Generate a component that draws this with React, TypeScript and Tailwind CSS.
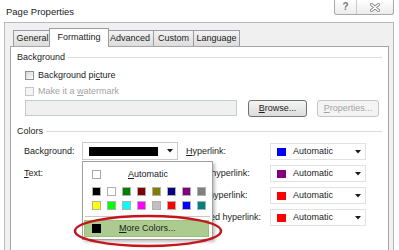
import React from 'react';

const row1 = ['#000000', '#ffffff', '#008000', '#800000', '#808000', '#000080', '#800080', '#808080'];
const row2 = ['#ffff00', '#00ff00', '#00ffff', '#ff00ff', '#c0c0c0', '#ff0000', '#0000ff', '#008080'];

function Arrow() {
  return (
    <svg width="6" height="4" viewBox="0 0 6 4" className="block">
      <path d="M0 0 H6 L3 3.5 Z" fill="#1a1a1a" />
    </svg>
  );
}

function ColorDrop({ color }: { color: string }) {
  return (
    <div className="flex h-[17px] w-[96px] items-center border border-[#e2e2e2] bg-white pl-[6px] pr-[4px]">
      <div className="h-[8px] w-[9px]" style={{ backgroundColor: color }} />
      <span className="ml-[7px] flex-1">Automatic</span>
      <Arrow />
    </div>
  );
}

function Tab({ label, cls }: { label: string; cls: string }) {
  return (
    <div
      className={`flex h-[16px] items-center justify-center border border-b-0 border-[#9a9ca3] bg-linear-to-b from-[#f3f3f3] to-[#dcdcdc] ${cls}`}
    >
      {label}
    </div>
  );
}

export default function App() {
  return (
    <div className="relative h-[250px] w-[399px] overflow-hidden bg-white text-[9px] leading-none text-[#1c1c1c] font-['Liberation_Sans',Arial,sans-serif]">
      {/* Title bar */}
      <div className="flex h-[22px] items-start justify-between">
        <div className="pl-[6px] pt-[7px] text-[9.5px] text-[#1a1a1a]">Page Properties</div>
        <div className="mr-[5px] flex h-[15px] overflow-hidden rounded-b-[3px] border border-t-0 border-[#a9a9a9] bg-linear-to-b from-[#ffffff] to-[#ececec]">
          <div className="flex w-[22px] items-center justify-center border-r border-[#c9c9c9] text-[10px] font-bold text-[#7a7a7a]">
            ?
          </div>
          <div className="flex w-[36px] items-center justify-center">
            <svg width="10" height="9" viewBox="0 0 10 9">
              <path d="M1.5 1.5 L8.5 7.5 M8.5 1.5 L1.5 7.5" stroke="#8a8a8a" strokeWidth="3" strokeLinecap="round" />
              <path d="M1.5 1.5 L8.5 7.5 M8.5 1.5 L1.5 7.5" stroke="#ffffff" strokeWidth="1.4" strokeLinecap="round" />
            </svg>
          </div>
        </div>
      </div>

      {/* Dialog client frame */}
      <div className="ml-[4px] h-[228px] w-[390px] border border-b-0 border-[#b9b9b9] bg-[#f0f0f0] pt-[7px]">
        {/* Tabs */}
        <div className="flex h-[16px] items-end">
          <Tab label="General" cls="ml-[8px] w-[39px]" />
          <div className="relative z-10 -mb-px -ml-[3px] flex h-[19px] w-[60px] items-center justify-center border border-b-0 border-[#9a9ca3] bg-white pb-[2px]">
            Formatting
          </div>
          <Tab label="Advanced" cls="-ml-[3px] w-[48px]" />
          <Tab label="Custom" cls="-ml-px w-[41px]" />
          <Tab label="Language" cls="-ml-px w-[47px]" />
        </div>

        {/* Tab page */}
        <div className="ml-[5px] h-[210px] w-[379px] border border-b-0 border-[#a3a5aa] bg-white px-[6px]">
          {/* Background group */}
          <div className="mt-[4px] flex h-[12px] items-center">
            <span>Background</span>
            <div className="ml-[3px] flex-1 border-t border-[#d8dde2]" />
          </div>
          <div className="mt-[6px] flex h-[12px] items-center pl-[8px]">
            <div className="h-[9px] w-[9px] border border-[#8e8f8f] bg-linear-to-br from-[#d8d8d8] to-[#fbfbfb]" />
            <span className="ml-[4px]">
              Background pi<span className="underline">c</span>ture
            </span>
          </div>
          <div className="mt-[4px] flex h-[12px] items-center pl-[8px]">
            <div className="h-[9px] w-[9px] border border-[#c6c6c6] bg-[#f4f4f4]" />
            <span className="ml-[4px] text-[#a3a3a3]">
              Make it a <span className="underline">w</span>atermark
            </span>
          </div>
          <div className="mt-[3px] flex items-start">
            <div className="ml-[8px] h-[16px] w-[212px] border border-[#c3ccd4] bg-[#f0f0f0]" />
            <div className="ml-[11px] flex h-[17px] w-[59px] items-center justify-center rounded-[3px] border border-[#707070] bg-linear-to-b from-[#f4f4f4] to-[#dcdcdc]">
              <span>
                <span className="underline">B</span>rowse...
              </span>
            </div>
            <div className="ml-[10px] flex h-[17px] w-[62px] items-center justify-center rounded-[3px] border border-[#c2c4c7] bg-[#f4f4f4] text-[#a3a3a3]">
              <span>
                <span className="underline">P</span>roperties...
              </span>
            </div>
          </div>

          {/* Colors group */}
          <div className="mt-[8px] flex h-[12px] items-center">
            <span>Colors</span>
            <div className="ml-[3px] flex-1 border-t border-[#d8dde2]" />
          </div>

          <div className="mt-[5px] flex h-[18px] items-center">
            <div className="w-[65px] pl-[7px]">Background:</div>
            <div className="flex h-[18px] w-[96px] items-center border border-[#c9c9c9] bg-white pl-[6px] pr-[4px]">
              <div className="h-[9px] w-[69px] bg-black" />
              <div className="flex-1" />
              <Arrow />
            </div>
            <div className="w-[92px] pl-[8px]">
              <span className="underline">H</span>yperlink:
            </div>
            <div className="self-end">
              <ColorDrop color="#0000ff" />
            </div>
          </div>

          <div className="mt-[5px] flex h-[17px] items-center">
            <div className="w-[161px] pl-[7px]">
              <span className="underline">T</span>ext:
            </div>
            <div className="w-[92px] pl-[4px]">Visited hyperlink:</div>
            <ColorDrop color="#800080" />
          </div>
          <div className="mt-[5px] flex h-[17px] items-center">
            <div className="w-[161px]" />
            <div className="w-[92px] pl-[4px]">Active hyperlink:</div>
            <ColorDrop color="#ff0000" />
          </div>
          <div className="mt-[5px] flex h-[17px] items-center">
            <div className="w-[161px]" />
            <div className="w-[92px] pl-[8px]">Hovered hyperlink:</div>
            <ColorDrop color="#ff0000" />
          </div>
        </div>
      </div>

      {/* Color picker popup */}
      <div className="absolute left-[82px] top-[161px] h-[79px] w-[131px] border border-[#a0a0a0] bg-white shadow-[2px_2px_3px_rgba(0,0,0,0.25)]">
        <div className="mt-[8px] flex h-[9px] items-center pl-[9px]">
          <div className="h-[9px] w-[9px] border border-[#a8a8a8] bg-white" />
          <span className="ml-[27px]">
            <span className="underline">A</span>utomatic
          </span>
        </div>
        <div className="mt-[8px] flex gap-[6px] pl-[9px]">
          {row1.map((c) => (
            <div key={c} className="h-[9px] w-[9px] border border-[#b0b0b0]" style={{ backgroundColor: c }} />
          ))}
        </div>
        <div className="mt-[5px] flex gap-[6px] pl-[9px]">
          {row2.map((c) => (
            <div key={c} className="h-[9px] w-[9px] border border-[#b0b0b0]" style={{ backgroundColor: c }} />
          ))}
        </div>
        <div className="mx-[2px] mt-[6px] border-t border-[#c8c8c8]" />
        <div className="ml-[1px] mr-[3px] mt-[3px] flex h-[17px] items-center border border-[#9cbf7e] bg-[#abcc8e] pl-[7px]">
          <div className="h-[9px] w-[9px] bg-black" />
          <span className="ml-[18px]">
            <span className="underline">M</span>ore Colors...
          </span>
        </div>
      </div>

      {/* Red highlight ellipse */}
      <svg className="absolute left-[72px] top-[213px]" width="152" height="36" viewBox="0 0 152 36">
        <ellipse cx="76" cy="18" rx="73" ry="15" fill="none" stroke="#c4161d" strokeWidth="2.5" />
      </svg>
    </div>
  );
}
